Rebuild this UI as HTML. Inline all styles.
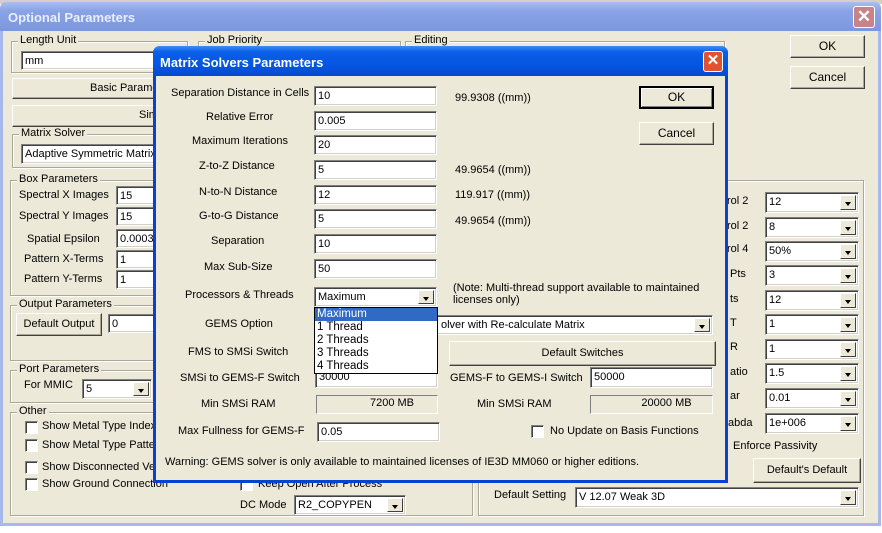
<!DOCTYPE html>
<html><head><meta charset="utf-8"><style>
*{box-sizing:border-box;margin:0;padding:0}
body{width:882px;height:533px;overflow:hidden;background:#fff;font-family:"Liberation Sans",sans-serif;font-size:11px;color:#000;position:relative}
div,span{position:absolute}
.t{white-space:nowrap;line-height:13px}
.in{background:#fff;border:1px solid;border-color:#808080 #fff #fff #808080;box-shadow:inset 1px 1px 0 #404040,inset -1px -1px 0 #d4d0c8;padding:3px 0 0 3px;white-space:nowrap;line-height:13px}
.btn{background:#ece9d8;border:1px solid;border-color:#fff #404040 #404040 #fff;box-shadow:inset -1px -1px 0 #aca899;text-align:center;white-space:nowrap;line-height:18px}
.ar{right:2px;top:2px;bottom:2px;width:16px;background:#ece9d8;border:1px solid;border-color:#fff #404040 #404040 #fff}
.ar::after{content:"";position:absolute;left:4px;top:6px;border-left:3.5px solid transparent;border-right:3.5px solid transparent;border-top:4px solid #000}
.grp{border:1px solid #aca899;box-shadow:1px 1px 0 #fff inset,1px 1px 0 #fff}
.lg{background:#ece9d8;padding:0 2px;top:-8px;left:6px;white-space:nowrap;line-height:13px}
.cb{width:13px;height:13px;background:#fff;border:1px solid;border-color:#808080 #fff #fff #808080;box-shadow:inset 1px 1px 0 #404040}
.ro{background:#ece9d8;border:1px solid;border-color:#808080 #fff #fff #808080;text-align:center;line-height:15px}
</style></head><body>
<div style="left:0;top:0;width:882px;height:4px;background:#d4d0c8"></div>
<div style="left:0;top:2px;width:881px;height:524px;background:#ece9d8;border:3px solid #a6b8ec;border-top:0;border-radius:6px 6px 0 0"></div>
<div style="left:0;top:2px;width:881px;height:29px;background:linear-gradient(#a9bdf0,#8aa3e6 30%,#7c97e0);border-radius:7px 7px 0 0"></div>
<div class="t" style="left:8px;top:10px;color:#e8eefc;font-weight:bold;font-size:13px;line-height:15px">Optional Parameters</div>
<div style="left:853px;top:6px;width:22px;height:22px;background:#c7838a;border:1px solid #fff;border-radius:3px;color:#fff;font-size:17px;text-align:center;line-height:19px;font-weight:bold">✕</div>

<div class="grp" style="left:11px;top:41px;width:177px;height:32px"><span class="lg">Length Unit</span></div>
<div class="in" style="left:21px;top:51px;width:150px;height:19px">mm</div>
<div class="grp" style="left:198px;top:41px;width:203px;height:32px"><span class="lg">Job Priority</span></div>
<div class="grp" style="left:405px;top:41px;width:320px;height:32px"><span class="lg">Editing</span></div>
<div class="btn" style="left:12px;top:78px;width:160px;height:21px"></div>
<div class="t" style="left:90px;top:82px">Basic Parameters</div>
<div class="btn" style="left:12px;top:105px;width:160px;height:22px"></div>
<div class="t" style="left:139px;top:109px">Sim</div>
<div class="grp" style="left:12px;top:134px;width:160px;height:34px"><span class="lg">Matrix Solver</span></div>
<div class="in" style="left:21px;top:144px;width:140px;height:20px">Adaptive Symmetric Matrix</div>

<div class="grp" style="left:10px;top:180px;width:150px;height:116px"><span class="lg">Box Parameters</span></div>
<div class="t" style="left:19px;top:189px">Spectral X Images</div>
<div class="in" style="left:116px;top:186px;width:45px;height:19px">15</div>
<div class="t" style="left:19px;top:210px">Spectral Y Images</div>
<div class="in" style="left:116px;top:207px;width:45px;height:19px">15</div>
<div class="t" style="left:27px;top:233px">Spatial Epsilon</div>
<div class="in" style="left:116px;top:229px;width:45px;height:19px">0.0003</div>
<div class="t" style="left:24px;top:253px">Pattern X-Terms</div>
<div class="in" style="left:116px;top:250px;width:45px;height:19px">1</div>
<div class="t" style="left:24px;top:273px">Pattern Y-Terms</div>
<div class="in" style="left:116px;top:270px;width:45px;height:19px">1</div>
<div class="grp" style="left:10px;top:305px;width:150px;height:56px"><span class="lg">Output Parameters</span></div>
<div class="btn" style="left:16px;top:313px;width:86px;height:23px;line-height:21px">Default Output</div>
<div class="in" style="left:108px;top:314px;width:50px;height:19px">0</div>
<div class="grp" style="left:10px;top:370px;width:150px;height:33px"><span class="lg">Port Parameters</span></div>
<div class="t" style="left:24px;top:379px">For MMIC</div>
<div class="in" style="left:82px;top:379px;width:70px;height:20px">5<span class="ar"></span></div>
<div class="grp" style="left:10px;top:412px;width:463px;height:104px"><span class="lg">Other</span></div>
<div class="cb" style="left:25px;top:421px"></div><div class="t" style="left:42px;top:420px">Show Metal Type Index</div>
<div class="cb" style="left:25px;top:439px"></div><div class="t" style="left:42px;top:439px">Show Metal Type Pattern</div>
<div class="cb" style="left:25px;top:461px"></div><div class="t" style="left:42px;top:461px">Show Disconnected Vertices</div>
<div class="cb" style="left:25px;top:478px"></div><div class="t" style="left:42px;top:478px">Show Ground Connection</div>
<div class="cb" style="left:240px;top:478px"></div><div class="t" style="left:258px;top:478px">Keep Open After Process</div>
<div class="t" style="left:240px;top:499px">DC Mode</div>
<div class="in" style="left:294px;top:495px;width:112px;height:20px">R2_COPYPEN<span class="ar"></span></div>

<div class="btn" style="left:790px;top:35px;width:75px;height:23px;line-height:21px;font-size:12px">OK</div>
<div class="btn" style="left:790px;top:66px;width:75px;height:23px;line-height:21px;font-size:12px">Cancel</div>
<div class="grp" style="left:478px;top:180px;width:386px;height:336px"></div>
<div class="t" style="left:727px;top:195px">rol 2</div><div class="in" style="left:765px;top:192px;width:94px;height:21px">12<span class="ar"></span></div>
<div class="t" style="left:727px;top:220px">rol 2</div><div class="in" style="left:765px;top:217px;width:94px;height:21px">8<span class="ar"></span></div>
<div class="t" style="left:727px;top:243px">rol 4</div><div class="in" style="left:765px;top:241px;width:94px;height:21px">50%<span class="ar"></span></div>
<div class="t" style="left:730px;top:268px">Pts</div><div class="in" style="left:765px;top:265px;width:94px;height:21px">3<span class="ar"></span></div>
<div class="t" style="left:730px;top:293px">ts</div><div class="in" style="left:765px;top:290px;width:94px;height:21px">12<span class="ar"></span></div>
<div class="t" style="left:730px;top:317px">T</div><div class="in" style="left:765px;top:314px;width:94px;height:21px">1<span class="ar"></span></div>
<div class="t" style="left:730px;top:341px">R</div><div class="in" style="left:765px;top:339px;width:94px;height:21px">1<span class="ar"></span></div>
<div class="t" style="left:730px;top:366px">atio</div><div class="in" style="left:765px;top:363px;width:94px;height:21px">1.5<span class="ar"></span></div>
<div class="t" style="left:730px;top:390px">ar</div><div class="in" style="left:765px;top:388px;width:94px;height:21px">0.01<span class="ar"></span></div>
<div class="t" style="left:728px;top:417px">abda</div><div class="in" style="left:765px;top:413px;width:94px;height:21px">1e+006<span class="ar"></span></div>
<div class="t" style="left:733px;top:440px">Enforce Passivity</div>
<div class="btn" style="left:753px;top:458px;width:108px;height:25px;line-height:23px">Default's Default</div>
<div class="t" style="left:494px;top:489px">Default Setting</div>
<div class="in" style="left:575px;top:487px;width:284px;height:21px">V 12.07 Weak 3D<span class="ar"></span></div>

<div style="left:153px;top:46px;width:575px;height:437px;background:#ece9d8;border:3px solid #0842d0;border-top:0;border-radius:7px 7px 0 0"></div>
<div style="left:153px;top:46px;width:575px;height:30px;background:linear-gradient(#3d8ef6,#0a5ee8 20%,#0454e0 70%,#0a48d0);border-radius:7px 7px 0 0"></div>
<div class="t" style="left:160px;top:55px;color:#fff;font-weight:bold;font-size:13px;line-height:15px">Matrix Solvers Parameters</div>
<div style="left:703px;top:51px;width:20px;height:21px;background:#e0532f;border:1px solid #fff;border-radius:3px;color:#fff;font-size:15px;text-align:center;line-height:18px;font-weight:bold">✕</div>

<div class="t" style="left:171px;top:87px">Separation Distance in Cells</div>
<div class="in" style="left:314px;top:86px;width:123px;height:20px">10</div>
<div class="t" style="left:455px;top:92px">99.9308 ((mm))</div>
<div class="btn" style="left:639px;top:86px;width:75px;height:23px;line-height:19px;border:2px solid;border-color:#000;box-shadow:inset 1px 1px 0 #fff,inset -1px -1px 0 #808080;font-size:12px">OK</div>
<div class="btn" style="left:639px;top:122px;width:75px;height:23px;line-height:21px;font-size:12px">Cancel</div>
<div class="t" style="left:206px;top:111px">Relative Error</div>
<div class="in" style="left:314px;top:111px;width:123px;height:20px">0.005</div>
<div class="t" style="left:192px;top:135px">Maximum Iterations</div>
<div class="in" style="left:314px;top:135px;width:123px;height:20px">20</div>
<div class="t" style="left:199px;top:160px">Z-to-Z Distance</div>
<div class="in" style="left:314px;top:160px;width:123px;height:20px">5</div>
<div class="t" style="left:455px;top:164px">49.9654 ((mm))</div>
<div class="t" style="left:199px;top:186px">N-to-N Distance</div>
<div class="in" style="left:314px;top:185px;width:123px;height:20px">12</div>
<div class="t" style="left:455px;top:189px">119.917 ((mm))</div>
<div class="t" style="left:199px;top:210px">G-to-G Distance</div>
<div class="in" style="left:314px;top:209px;width:123px;height:20px">5</div>
<div class="t" style="left:455px;top:215px">49.9654 ((mm))</div>
<div class="t" style="left:211px;top:235px">Separation</div>
<div class="in" style="left:314px;top:234px;width:123px;height:20px">10</div>
<div class="t" style="left:204px;top:261px">Max Sub-Size</div>
<div class="in" style="left:314px;top:259px;width:123px;height:20px">50</div>
<div class="t" style="left:185px;top:289px">Processors &amp; Threads</div>
<div class="in" style="left:314px;top:287px;width:123px;height:20px">Maximum<span class="ar"></span></div>
<div class="t" style="left:453px;top:282px">(Note: Multi-thread support available to maintained</div>
<div class="t" style="left:453px;top:294px">licenses only)</div>
<div class="t" style="left:205px;top:318px">GEMS Option</div>
<div class="in" style="left:314px;top:315px;width:399px;height:20px;padding-left:126px">olver with Re-calculate Matrix<span class="ar"></span></div>
<div class="t" style="left:188px;top:346px">FMS to SMSi Switch</div>
<div class="btn" style="left:449px;top:341px;width:267px;height:25px;line-height:23px">Default Switches</div>
<div class="t" style="left:180px;top:372px">SMSi to GEMS-F Switch</div>
<div class="in" style="left:315px;top:367px;width:123px;height:21px">30000</div>
<div class="t" style="left:450px;top:372px">GEMS-F to GEMS-I Switch</div>
<div class="in" style="left:590px;top:367px;width:123px;height:21px">50000</div>
<div class="t" style="left:201px;top:398px">Min SMSi RAM</div>
<div class="ro" style="left:316px;top:395px;width:122px;height:19px;padding-left:30px">7200 MB</div>
<div class="t" style="left:477px;top:398px">Min SMSi RAM</div>
<div class="ro" style="left:590px;top:395px;width:123px;height:19px;padding-left:30px">20000 MB</div>
<div class="t" style="left:178px;top:425px">Max Fullness for GEMS-F</div>
<div class="in" style="left:317px;top:422px;width:123px;height:20px">0.05</div>
<div class="cb" style="left:531px;top:425px"></div>
<div class="t" style="left:550px;top:425px">No Update on Basis Functions</div>
<div class="t" style="left:165px;top:456px">Warning: GEMS solver is only available to maintained licenses of IE3D MM060 or higher editions.</div>

<div style="left:314px;top:307px;width:124px;height:67px;background:#fff;border:1px solid #000;font-size:11.5px">
<div class="t" style="left:0;top:0;width:122px;height:13px;background:#316ac5;color:#fff;padding-left:2px">Maximum</div>
<div class="t" style="left:2px;top:13px">1 Thread</div>
<div class="t" style="left:2px;top:26px">2 Threads</div>
<div class="t" style="left:2px;top:39px">3 Threads</div>
<div class="t" style="left:2px;top:52px">4 Threads</div>
</div>
</body></html>
